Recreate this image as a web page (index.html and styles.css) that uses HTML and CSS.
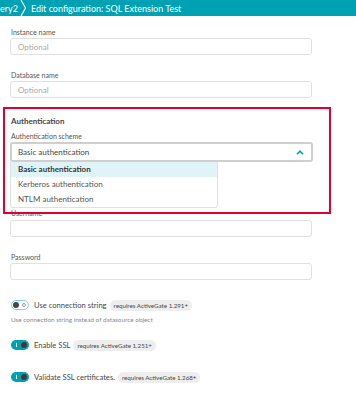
FILE: index.html
```html
<!DOCTYPE html>
<html>
<head>
<meta charset="utf-8">
<link rel="stylesheet" href="styles.css">
</head>
<body>
<header class="topbar">
  <span class="crumb crumb-prev">ery2</span>
  <svg class="crumb-sep" width="7" height="16" viewBox="0 0 7 16"><path d="M1 0 L5.5 8 L1 16" fill="none" stroke="#ffffff" stroke-width="1.1"/></svg>
  <span class="crumb crumb-current">Edit configuration: SQL Extension Test</span>
</header>
<main class="form">
  <div class="field first">
    <label class="label">Instance name</label>
    <div class="input"><span class="placeholder">Optional</span></div>
  </div>
  <div class="field">
    <label class="label">Database name</label>
    <div class="input"><span class="placeholder">Optional</span></div>
  </div>
  <section class="auth">
    <h3 class="section-title">Authentication</h3>
    <label class="label">Authentication scheme</label>
    <div class="select-wrap">
      <div class="select">
        <span class="select-value">Basic authentication</span>
        <svg class="chevron" width="8" height="5" viewBox="0 0 8 5"><path d="M1 4.2 L4 1.2 L7 4.2" fill="none" stroke="#00a1b2" stroke-width="1.6"/></svg>
      </div>
      <ul class="dropdown">
        <li class="option active">Basic authentication</li>
        <li class="option">Kerberos authentication</li>
        <li class="option">NTLM authentication</li>
      </ul>
    </div>
    <div class="field username">
      <label class="label">Username</label>
      <div class="input"></div>
    </div>
    <div class="field">
      <label class="label">Password</label>
      <div class="input"></div>
    </div>
  </section>
  <div class="toggle-row first-toggle">
    <span class="toggle off"><span class="knob"></span><span class="ring"></span></span>
    <span class="toggle-text">Use connection string</span>
    <span class="badge">requires ActiveGate 1.291+</span>
  </div>
  <div class="hint">Use connection string instead of datasource object</div>
  <div class="toggle-row ssl">
    <span class="toggle on"><span class="bar"></span><span class="knob"></span></span>
    <span class="toggle-text">Enable SSL</span>
    <span class="badge">requires ActiveGate 1.251+</span>
  </div>
  <div class="toggle-row validate">
    <span class="toggle on"><span class="bar"></span><span class="knob"></span></span>
    <span class="toggle-text">Validate SSL certificates.</span>
    <span class="badge">requires ActiveGate 1.268+</span>
  </div>
</main>
<div class="highlight-box"></div>
</body>
</html>
```
FILE: styles.css
```css
* { box-sizing: border-box; }
html, body { margin: 0; padding: 0; background: #ffffff; }
body {
  font-family: Lato, "Open Sans", sans-serif;
  color: #454646;
  width: 356px;
  height: 400px;
  overflow: hidden;
  position: relative;
}
.topbar {
  height: 16px;
  background: #00a1b2;
  display: flex;
  align-items: center;
  color: #ffffff;
  font-size: 9px;
}
.crumb-prev { padding-left: 0; }
.crumb-sep { margin-left: 2px; margin-right: 4px; display: block; }
.form { padding: 11px 0 0 10px; }
.field { margin-top: 15px; }
.field.first { margin-top: 0; }
.label {
  display: block;
  font-size: 7px;
  line-height: 10px;
  color: #555;
  padding-left: 1px;
  margin-bottom: 1px;
}
.input {
  width: 302px;
  height: 17px;
  border: 1px solid #e0e0e0;
  border-radius: 3px;
  display: flex;
  align-items: center;
  padding-left: 7px;
  font-size: 8px;
}
.placeholder { color: #a8a8a8; }
.auth { margin-top: 17px; }
.section-title {
  margin: 0;
  font-size: 8px;
  line-height: 12px;
  font-weight: 700;
  color: #454646;
  padding-left: 1px;
  margin-bottom: 4px;
}
.select-wrap { position: relative; }
.select {
  width: 303px;
  height: 20px;
  border: 2px solid #cfcfcf;
  border-radius: 3px;
  display: flex;
  align-items: center;
  justify-content: space-between;
  padding: 0 7px 0 6px;
  font-size: 8px;
  color: #454646;
}
.chevron { display: block; }
.dropdown {
  position: absolute;
  left: 0;
  top: 20px;
  width: 208px;
  margin: 0;
  padding: 0;
  list-style: none;
  background: #ffffff;
  border: 1px solid #e0e0e0;
  border-top: none;
  border-radius: 0 0 3px 3px;
  z-index: 2;
}
.option {
  height: 15px;
  line-height: 15px;
  padding-left: 7px;
  font-size: 8px;
  color: #555;
}
.option.active {
  background: #e0f4f7;
  font-weight: 700;
  color: #353535;
}
.field.username { margin-top: 46px; }
.field.username .label { margin-bottom: 2px; }
.toggle-row {
  display: flex;
  align-items: center;
  height: 12px;
  padding-left: 1px;
}
.first-toggle { margin-top: 19px; }
.toggle {
  position: relative;
  width: 18px;
  height: 10px;
  border-radius: 5px;
  flex: none;
}
.toggle.off {
  border: 1px solid #7fd0d8;
  background: #ffffff;
}
.toggle.off .knob {
  position: absolute;
  left: 1px; top: 1px;
  width: 6px; height: 6px;
  border-radius: 50%;
  background: #454646;
}
.toggle.off .ring {
  position: absolute;
  right: 2px; top: 2px;
  width: 4px; height: 4px;
  border-radius: 50%;
  border: 1px solid #9a9a9a;
}
.toggle.on { background: #00a1b2; }
.toggle.on .knob {
  position: absolute;
  right: 2px; top: 2px;
  width: 6px; height: 6px;
  border-radius: 50%;
  background: #3a3a3a;
}
.toggle.on .bar {
  position: absolute;
  left: 5px; top: 3px;
  width: 1px; height: 4px;
  background: #ffffff;
}
.toggle-text {
  margin-left: 5px;
  font-size: 7.6px;
  color: #454646;
}
.badge {
  margin-left: 3px;
  background: #eeeeee;
  border-radius: 6px;
  font-size: 6.2px;
  color: #454646;
  height: 11px;
  line-height: 11px;
  padding: 0 4px;
}
.hint {
  margin-top: 4px;
  padding-left: 1px;
  font-size: 6.4px;
  line-height: 10px;
  color: #8a8a8a;
}
.ssl { margin-top: 14px; }
.validate { margin-top: 20px; }
.highlight-box {
  position: absolute;
  left: 3px;
  top: 107px;
  width: 328px;
  height: 107px;
  border: 2px solid #e4002b;
  pointer-events: none;
  z-index: 3;
}
```
